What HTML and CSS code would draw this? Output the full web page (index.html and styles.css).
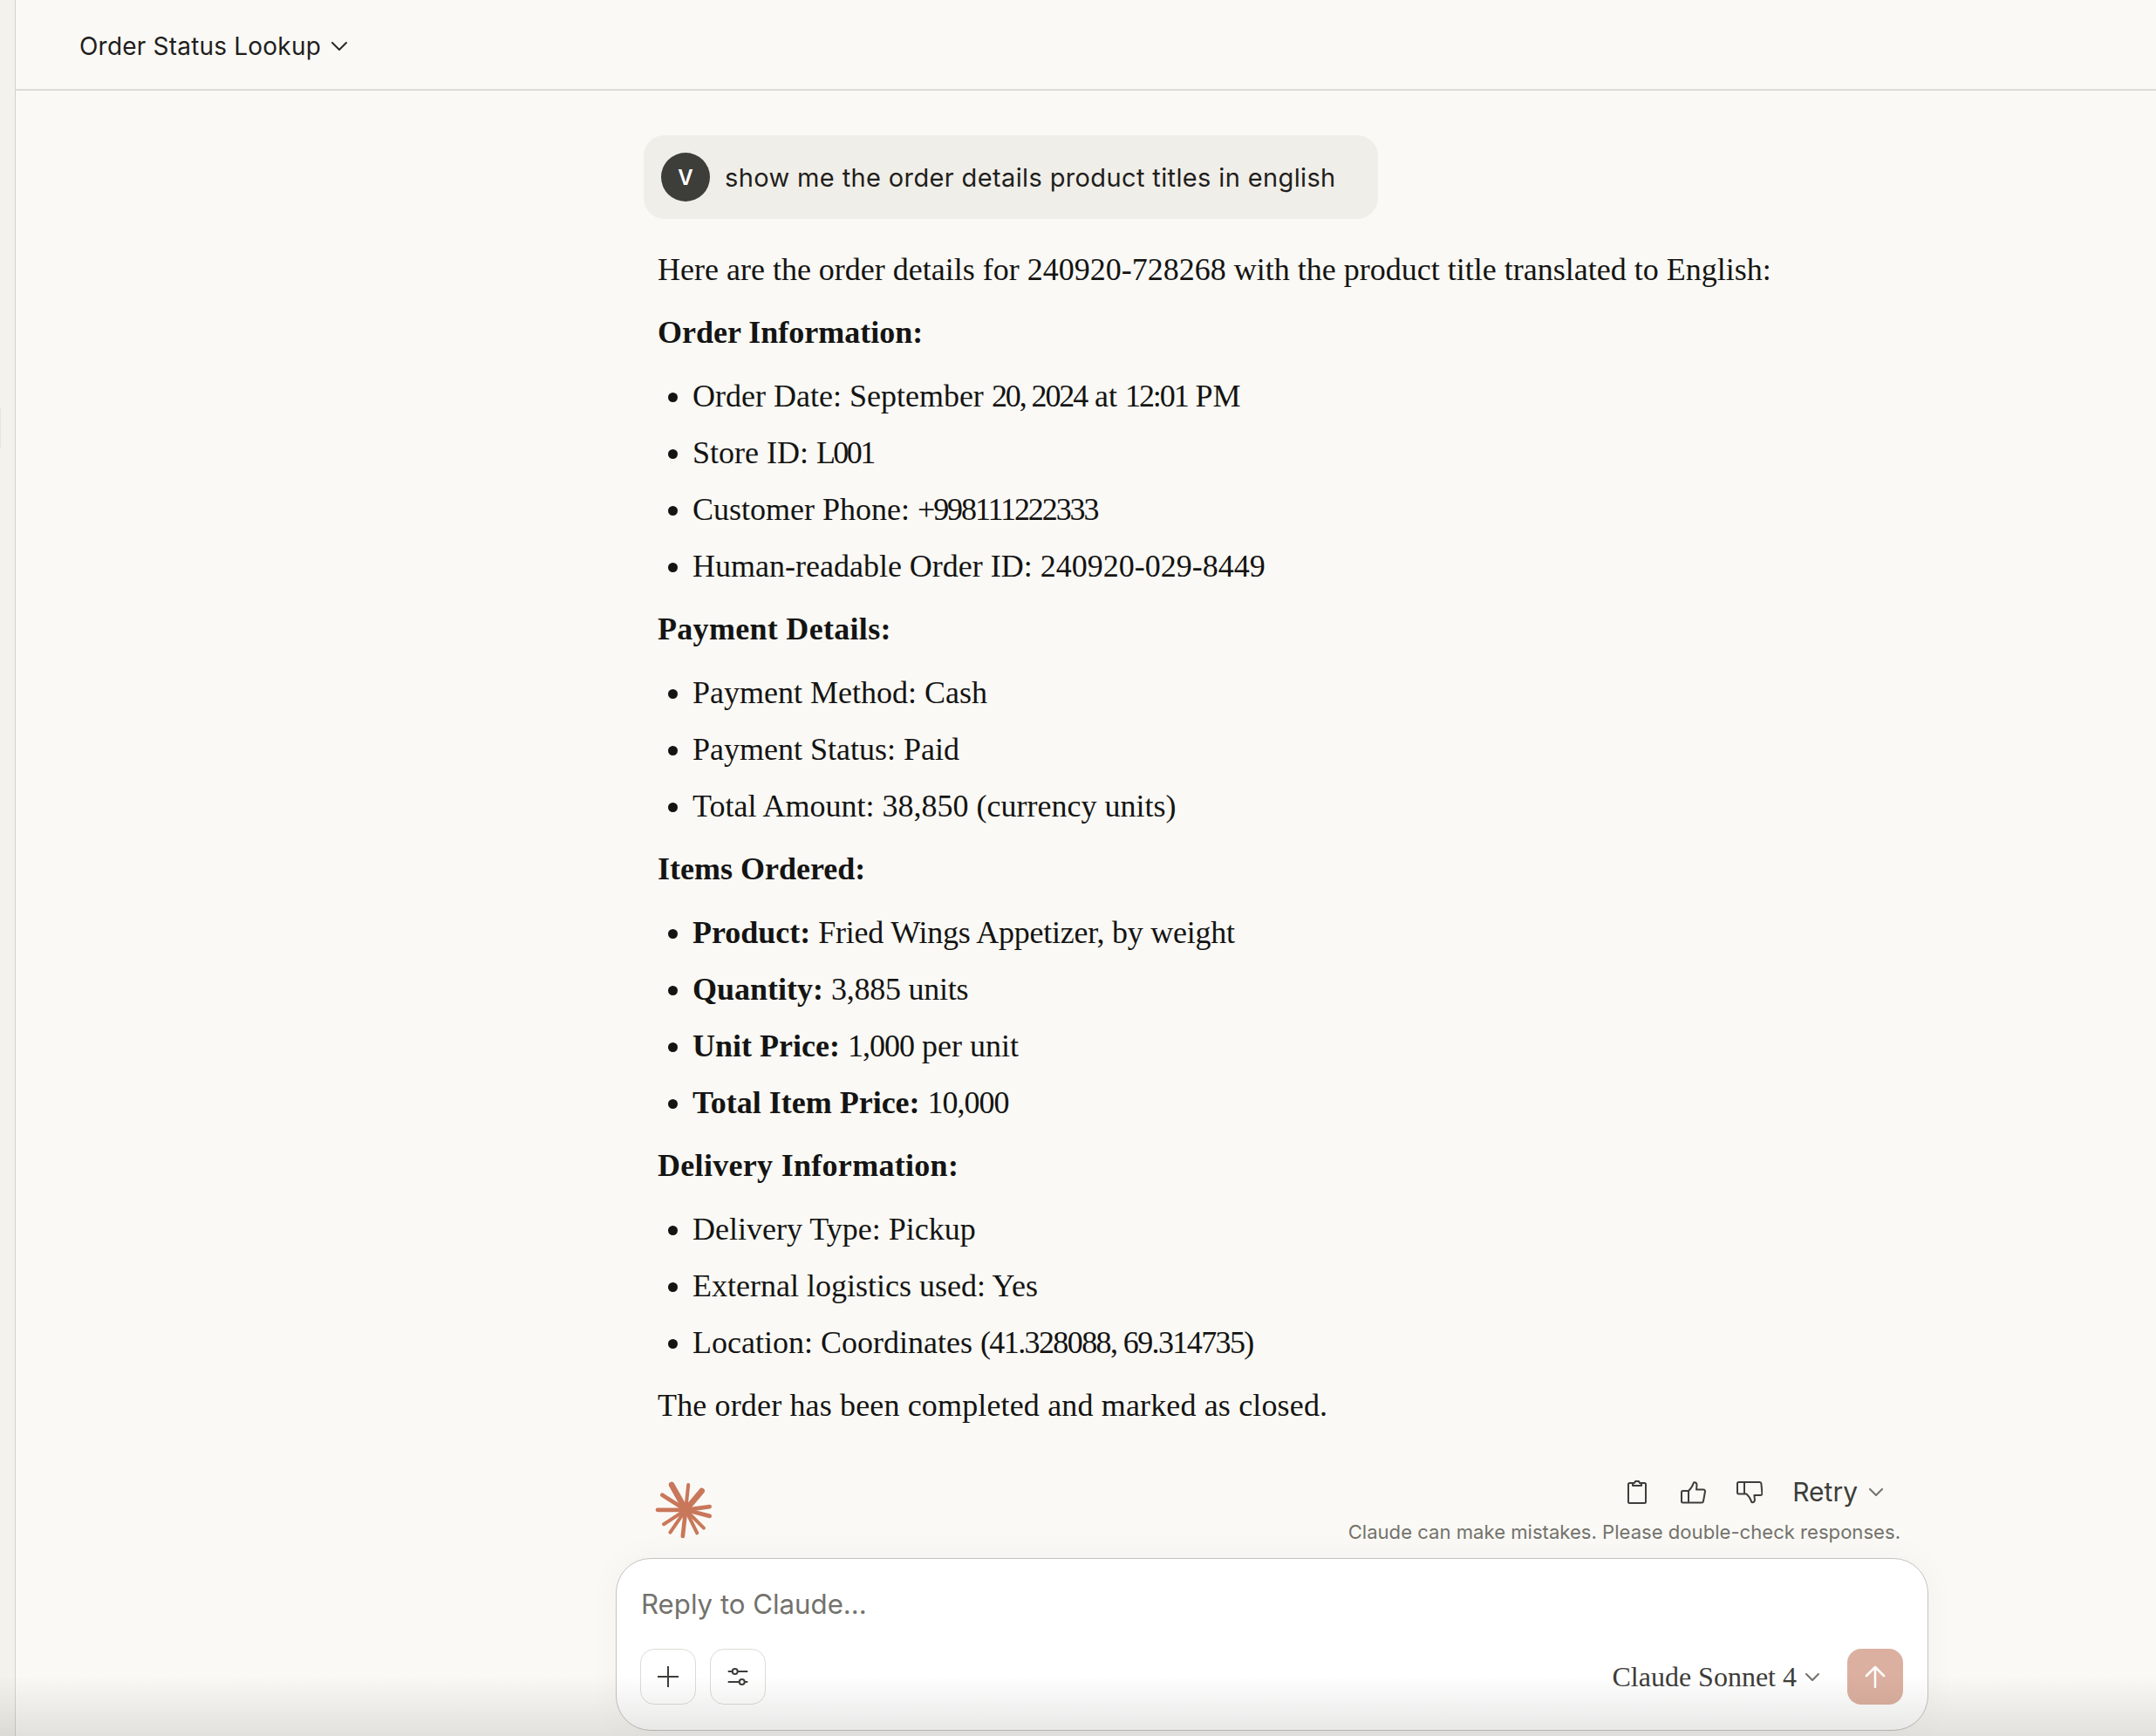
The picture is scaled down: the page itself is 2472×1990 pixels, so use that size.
FILE: index.html
```html
<!DOCTYPE html>
<html lang="en">
<head>
<meta charset="utf-8">
<title>Order Status Lookup</title>
<link rel="stylesheet" href="styles.css">
</head>
<body>
<div class="app">
  <aside class="rail"><span class="rail-handle"></span></aside>
  <main class="main">
    <header class="topbar">
      <span class="title">Order Status Lookup</span>
      <svg class="chev title-chev" viewBox="0 0 18 10"><path d="M1 1l8 8 8-8"/></svg>
    </header>
    <section class="thread">
      <div class="bubble">
        <span class="avatar">V</span>
        <span class="bubble-text">show me the order details product titles in english</span>
      </div>
      <article class="answer">
        <p class="para first">Here are the order details for 240920-728268 with the product title translated to English:</p>
        <p class="para"><b>Order Information:</b></p>
        <ul class="list">
          <li>Order Date: September <span class="n-tight">20, 2024</span> at <span class="n-tight">12:01</span> PM</li>
          <li>Store ID: <span class="n-store">L001</span></li>
          <li>Customer Phone: <span class="n-tight">+998111222333</span></li>
          <li>Human-readable Order ID: 240920-029-8449</li>
        </ul>
        <p class="para"><b class="spaced">Payment Details:</b></p>
        <ul class="list">
          <li>Payment Method: Cash</li>
          <li>Payment Status: Paid</li>
          <li>Total Amount: 38,850 (currency units)</li>
        </ul>
        <p class="para"><b>Items Ordered:</b></p>
        <ul class="list">
          <li><b>Product:</b> <span class="snug">Fried Wings Appetizer, by weight</span></li>
          <li><b>Quantity:</b> <span class="snug">3,885 units</span></li>
          <li><b>Unit Price:</b> <span class="n-loose">1,000</span> per unit</li>
          <li><b>Total Item Price:</b> <span class="n-loose">10,000</span></li>
        </ul>
        <p class="para"><b class="spaced">Delivery Information:</b></p>
        <ul class="list">
          <li>Delivery Type: Pickup</li>
          <li>External logistics used: Yes</li>
          <li>Location: Coordinates <span class="n-coord">(41.328088, 69.314735)</span></li>
        </ul>
        <p class="para open">The order has been completed and marked as closed.</p>
      </article>
    </section>
    <footer class="dock">
      <div class="meta">
        <svg class="spark" viewBox="210 110 200 200" aria-hidden="true">
          <g class="spark-thick">
            <path d="M318 208L270 122"/><path d="M318 208L373 143"/>
          </g>
          <g class="spark-mid">
            <path d="M318 208L238 157"/><path d="M318 208L400 197"/><path d="M318 208L400 229"/>
            <path d="M318 208L222 208"/><path d="M318 208L308 298"/>
          </g>
          <g class="spark-thin">
            <path d="M318 208L327 122"/><path d="M318 208L380 270"/><path d="M318 208L357 287"/>
            <path d="M318 208L265 285"/><path d="M318 208L243 257"/>
          </g>
          <circle class="spark-core" cx="318" cy="208" r="22"/>
        </svg>
        <div class="meta-right">
          <div class="actions">
            <svg class="icon clip" viewBox="0 0 24 28"><path d="M7 4H3.500a1.500 1.500 0 0 0-1.500 1.500v20a1.500 1.500 0 0 0 1.500 1.500h17a1.500 1.500 0 0 0 1.500-1.500v-20a1.500 1.500 0 0 0-1.500-1.500H17"/><path d="M7 4.500V7h10V4.500c-2 0-2.500-.5-3-2.500h-4c-.5 2-1 2.500-3 2.500z"/></svg>
            <svg class="icon thumb" viewBox="0 0 30 27"><path d="M9 12h-6.500a1.500 1.500 0 0 0-1.500 1.500v10.500a1.500 1.500 0 0 0 1.500 1.500h21.500a2 2 0 0 0 2-1.700l2-11a2 2 0 0 0-2-2.300h-8l.5-5c.2-2.500-1.500-3.500-3.500-3-1 3-3 7-6 9.500zm0 0v13.500"/></svg>
            <svg class="icon thumb-down" viewBox="0 0 30 27"><path d="M9 15h-6.500a1.500 1.500 0 0 1-1.500-1.500v-10.500a1.500 1.500 0 0 1 1.500-1.500h24a2 2 0 0 1 1.900 1.700l1 11a2 2 0 0 1-2 2.300h-7l.5 5c.2 2.500-1.500 3.500-3.500 3-1-3-3-7-6-9.500zm0 0v-13.500" transform="translate(0 .500)"/></svg>
            <span class="retry">Retry</span>
            <svg class="chev retry-chev" viewBox="0 0 16 9"><path d="M1 1l7 7 7-7"/></svg>
          </div>
          <div class="note">Claude can make mistakes. Please double-check responses.</div>
        </div>
      </div>
      <div class="composer">
        <div class="placeholder">Reply to Claude...</div>
        <div class="tools">
          <span class="tool"><svg class="tool-icon" viewBox="0 0 32 32"><path d="M16 4v24M4 16h24"/></svg></span>
          <span class="tool"><svg class="tool-icon" viewBox="0 0 32 32"><path d="M4.700 10h5M16 10h11.300M4.700 22h13M24 22h3.300"/><circle cx="12.700" cy="10" r="3"/><circle cx="20.700" cy="22" r="3"/></svg></span>
          <span class="model">Claude Sonnet 4</span>
          <svg class="chev model-chev" viewBox="0 0 16 9"><path d="M1 1l7 7 7-7"/></svg>
          <span class="send"><svg class="send-icon" viewBox="0 0 24 26"><path d="M12 25V2M2 12L12 2l10 10"/></svg></span>
        </div>
      </div>
    </footer>
    <div class="fade"></div>
  </main>
</div>
</body>
</html>
```
FILE: styles.css
```css
* { box-sizing: border-box; }
html, body { margin: 0; height: 100%; }
body {
  width: 2472px;
  height: 1990px;
  overflow: hidden;
  background: #faf9f5;
  color: #141413;
  font-family: "Liberation Serif", serif;
}
.app { display: flex; height: 1990px; }
.rail {
  position: relative;
  flex: 0 0 18px;
  background: #f3f2ed;
  border-right: 1px solid #d3d2cc;
}
.rail-handle {
  position: absolute;
  left: 0;
  top: 467px;
  width: 1px;
  height: 46px;
  background: #e6e5de;
}
.main {
  position: relative;
  flex: 1;
  display: flex;
  flex-direction: column;
  min-width: 0;
  background: #faf9f5;
}
.topbar {
  display: flex;
  align-items: center;
  height: 104px;
  padding: 4px 0 0 73px;
  border-bottom: 2px solid #dedcd6;
  flex: none;
}
.title {
  font-family: Inter, "Open Sans", sans-serif;
  font-size: 28px;
  letter-spacing: 0.2px;
  color: #1f1e1d;
}
.chev { fill: none; stroke-width: 2; stroke-linecap: round; stroke-linejoin: round; }
.title-chev { width: 18px; height: 10px; margin-left: 12px; stroke: #2b2a28; }
.thread {
  flex: 1;
  min-height: 0;
  padding: 51px 0 0 720px;
}
.bubble {
  display: inline-flex;
  align-items: center;
  height: 96px;
  padding: 0 48px 0 20px;
  gap: 17px;
  background: #f0eee8;
  border-radius: 24px;
}
.avatar {
  display: flex;
  align-items: center;
  justify-content: center;
  width: 56px;
  height: 56px;
  border-radius: 50%;
  background: #3d3d3a;
  color: #fff;
  font: 600 24px Inter, sans-serif;
}
.bubble-text {
  font-family: Inter, "Open Sans", sans-serif;
  font-size: 29px;
  letter-spacing: 0.37px;
  color: #1f1e1d;
}
.answer {
  padding-left: 16px;
  font-size: 36px;
  color: #141413;
}
.n-tight { letter-spacing: -2.1px; }
.n-store { letter-spacing: -2.6px; }
.n-loose { letter-spacing: -1px; }
.n-coord { letter-spacing: -1.6px; }
.snug { letter-spacing: -0.25px; }
.spaced { letter-spacing: 0.3px; }
.open { letter-spacing: 0.15px; }
.para { margin: 0; line-height: 72px; height: 72px; }
.para.first { margin-top: 22px; }
.para b { font-weight: 700; }
.list {
  margin: 5px 0 3px;
  padding: 0 0 0 40px;
  list-style: disc;
}
.list li { line-height: 65px; height: 65px; }
.dock {
  flex: none;
  width: 1505px;
  margin: 0 0 6px 688px;
  position: relative;
  z-index: 1;
}
.meta {
  display: flex;
  justify-content: space-between;
  padding: 0 32px 0 44px;
  height: 96px;
}
.spark { width: 67px; height: 67px; margin-top: 8px; flex: none; }
.spark path { stroke: #c9775a; stroke-linecap: round; fill: none; }
.spark-core { fill: #c9775a; }
.spark-thick path { stroke-width: 20; }
.spark-mid path { stroke-width: 14; }
.spark-thin path { stroke-width: 12; }
.meta-right { display: flex; flex-direction: column; align-items: flex-end; }
.actions {
  display: flex;
  align-items: center;
  height: 40px;
  padding-right: 20px;
}
.icon { fill: none; stroke: #3d3d3a; stroke-width: 2; stroke-linejoin: round; stroke-linecap: round; }
.clip { width: 24px; height: 28px; }
.thumb { width: 30px; height: 27px; margin-left: 38px; }
.thumb-down { width: 30px; height: 27px; margin-left: 34px; }
.retry {
  margin-left: 34px;
  font-family: Inter, sans-serif;
  font-size: 30px;
  color: #3d3d3a;
}
.retry-chev { width: 16px; height: 9px; margin-left: 13px; stroke: #73726c; }
.note {
  margin-top: 13px;
  font-family: Inter, sans-serif;
  font-size: 22.100px;
  color: #73726c;
}
.composer {
  position: relative;
  height: 198px;
  padding: 32px 28px 0 27px;
  background: #fff;
  border: 1.500px solid #c4c3bf;
  border-radius: 40px;
  box-shadow: 0 0 40px rgba(0, 0, 0, 0.035);
}
.placeholder {
  padding-left: 1px;
  font-family: Inter, sans-serif;
  font-size: 31.200px;
  line-height: 40px;
  color: #73726c;
}
.tools {
  display: flex;
  align-items: center;
  margin-top: 31px;
}
.tool {
  display: flex;
  align-items: center;
  justify-content: center;
  width: 64px;
  height: 64px;
  margin-right: 16px;
  border: 1.500px solid #dcdbd6;
  border-radius: 16px;
}
.tool-icon { width: 32px; height: 32px; fill: none; stroke: #3d3d3a; stroke-width: 2; }
.tool-icon circle { fill: #fff; }
.model {
  margin-left: auto;
  font-size: 32px;
  color: #3d3d3a;
}
.model-chev { width: 16px; height: 9px; margin: 0 32px 0 10px; stroke: #73726c; }
.send {
  display: flex;
  align-items: center;
  justify-content: center;
  width: 64px;
  height: 64px;
  border-radius: 16px;
  background: #dcb0a0;
}
.send-icon { width: 24px; height: 26px; fill: none; stroke: #fff; stroke-width: 2.500; stroke-linecap: round; stroke-linejoin: round; }
.fade {
  position: absolute;
  left: -18px;
  right: 0;
  bottom: 0;
  height: 70px;
  z-index: 2;
  pointer-events: none;
  background: linear-gradient(to bottom, rgba(60, 60, 55, 0), rgba(60, 60, 55, 0.13));
}
```
